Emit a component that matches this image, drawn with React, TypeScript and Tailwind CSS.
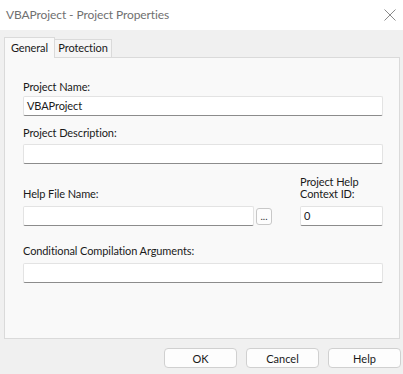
import React from 'react';

// Project Properties dialog (VBA editor)

const font = { fontFamily: 'Lato, "Noto Sans", sans-serif' };

const TextBox: React.FC<{ value?: string; className?: string }> = ({ value, className }) => (
  <div
    className={`h-[20px] bg-white border border-[#e3e3e3] border-b-[#8c8c8c] rounded-[2px] flex items-center px-[3px] text-[11px] tracking-[-0.1px] text-[#1a1a1a] ${className ?? ''}`}
  >
    {value}
  </div>
);

const DialogButton: React.FC<{ label: string }> = ({ label }) => (
  <button className="w-[73px] h-[20px] rounded-[4px] border border-[#d0d0d0] bg-[#fdfdfd] text-[11px] leading-none text-[#1a1a1a] flex items-center justify-center">
    {label}
  </button>
);

const App: React.FC = () => {
  return (
    <div className="w-[403px] h-[374px] bg-[#f0f0f0] flex flex-col overflow-hidden" style={font}>
      {/* Title bar */}
      <div className="h-[30px] bg-white flex items-center justify-between pl-[6px] pr-[6px]">
        <span className="text-[12px] tracking-[-0.1px] text-[#707070]">VBAProject - Project Properties</span>
        <svg width="12" height="12" viewBox="0 0 12 12" className="mr-[1px]">
          <path d="M0.5 0.5 L11.5 11.5 M11.5 0.5 L0.5 11.5" stroke="#8a8a8a" strokeWidth="1" fill="none" />
        </svg>
      </div>

      {/* Tabs */}
      <div className="flex items-end h-[27px] px-[4px] text-[11px] tracking-[-0.1px] text-[#1a1a1a]">
        <div className="h-[21px] w-[51px] bg-[#f9f9f9] border border-b-0 border-[#dadada] flex items-center justify-center relative z-10 -mb-[1px]">
          General
        </div>
        <div className="h-[18px] w-[57px] bg-[#f5f5f5] border border-l-0 border-b-0 border-[#dadada] flex items-center justify-center">
          Protection
        </div>
      </div>

      {/* Panel */}
      <div className="mx-[4px] w-[396px] h-[282px] bg-[#f9f9f9] border border-[#dadada] pl-[18px] pr-[16px] flex flex-col text-[11px] tracking-[-0.1px] text-[#1a1a1a]">
        <div className="mt-[21px] h-[16px] leading-[16px]">Project Name:</div>
        <TextBox value="VBAProject" className="mt-[1px]" />

        <div className="mt-[9px] h-[16px] leading-[16px]">Project Description:</div>
        <TextBox className="mt-[3px]" />

        <div className="mt-[12px] flex">
          <div className="w-[249px] flex flex-col">
            <div className="mt-[12px] h-[12px] leading-[12px]">Help File Name:</div>
            <div className="mt-[6px] flex items-center gap-[2px]">
              <TextBox className="w-[231px] h-[19px]" />
              <div className="w-[16px] h-[17px] rounded-[3px] border border-[#c8c8c8] bg-[#fdfdfd] flex items-center justify-center text-[10px] leading-none text-[#333]">
                ...
              </div>
            </div>
          </div>
          <div className="ml-[28px] w-[83px] flex flex-col">
            <div className="leading-[12px]">Project Help</div>
            <div className="leading-[12px]">Context ID:</div>
            <TextBox value="0" className="mt-[6px] h-[19px]" />
          </div>
        </div>

        <div className="mt-[17px] h-[16px] leading-[16px]">Conditional Compilation Arguments:</div>
        <TextBox className="mt-[4px]" />
      </div>

      {/* Buttons */}
      <div className="mt-[9px] flex justify-end gap-[9px] pr-[2px]">
        <DialogButton label="OK" />
        <DialogButton label="Cancel" />
        <DialogButton label="Help" />
      </div>
    </div>
  );
};

export default App;
